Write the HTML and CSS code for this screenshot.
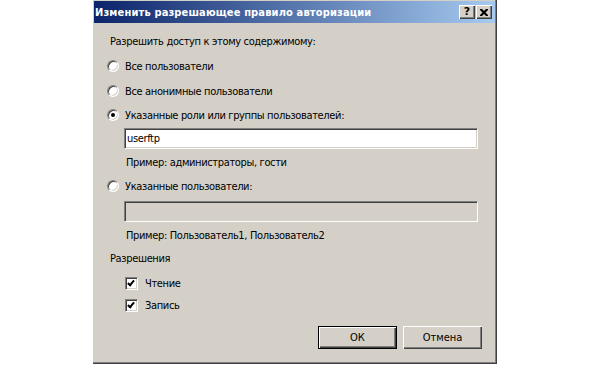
FILE: index.html
```html
<!DOCTYPE html>
<html lang="ru">
  <head>
    <meta charset="utf-8" />
    <title>Изменить разрешающее правило авторизации</title>
    <link rel="stylesheet" href="styles.css">
  </head>
  <body>
    <div class="dialog">
      <div class="titlebar">
        <span class="title">Изменить разрешающее правило авторизации</span>
        <div class="caption-buttons">
          <button class="cap-btn">?</button>
          <button class="cap-btn close">
            <svg width="8" height="7" viewBox="0 0 8 7"><path d="M0 0h2l2 2 2-2h2v1l-2.5 2.5 2.5 2.5v1h-2l-2-2-2 2h-2v-1l2.5-2.5-2.5-2.5z" fill="#000"/></svg>
          </button>
        </div>
      </div>

      <div class="content">
        <div class="row label gap-10">Разрешить доступ к этому содержимому:</div>

        <label class="row option gap-9">
          <span class="radio"></span>
          Все пользователи
        </label>
        <label class="row option gap-9">
          <span class="radio"></span>
          Все анонимные пользователи
        </label>
        <label class="row option gap-8">
          <span class="radio checked"></span>
          Указанные роли или группы пользователей:
        </label>
        <div class="field gap-5">userftp</div>
        <div class="row hint gap-5">Пример: администраторы, гости</div>

        <label class="row option gap-8">
          <span class="radio"></span>
          Указанные пользователи:
        </label>
        <div class="field disabled gap-7"></div>
        <div class="row hint gap-5">Пример: Пользователь1, Пользователь2</div>

        <div class="row label gap-7">Разрешения</div>
        <label class="row check gap-9">
          <span class="checkbox"></span>
          Чтение
        </label>
        <label class="row check gap-6">
          <span class="checkbox"></span>
          Запись
        </label>

        <div class="actions">
          <button class="btn default">ОК</button>
          <button class="btn">Отмена</button>
        </div>
      </div>
    </div>
  </body>
</html>
```

FILE: styles.css
```css
*,
*::before,
*::after {
  box-sizing: border-box;
}

* {
  margin: 0;
}

body {
  background: #fff;
  font-family: "DejaVu Sans Condensed", "DejaVu Sans", sans-serif;
  font-stretch: condensed;
  font-size: 11px;
  letter-spacing: -0.35px;
  color: #000;
}

.dialog {
  margin-left: 92px;
  width: 405px;
  height: 364px;
  background: #d4d0c8;
  display: flex;
  flex-direction: column;
  padding: 0 2px 2px 2px;
  box-shadow:
    inset 1px 0 0 #fff,
    inset -1px -1px 0 #404040,
    inset -2px -2px 0 #808080;
}

.titlebar {
  height: 22px;
  margin-top: 1px;
  background: linear-gradient(to right, #0a246a, #a6caf0);
  display: flex;
  align-items: center;
  justify-content: space-between;
  padding: 0 3px 0 1px;
}

.title {
  color: #fff;
  font-weight: bold;
  font-size: 11px;
  letter-spacing: 0.15px;
}

.caption-buttons {
  display: flex;
  gap: 1px;
}

.cap-btn {
  width: 16px;
  height: 14px;
  padding: 0;
  border: none;
  background: #d4d0c8;
  font-family: "DejaVu Sans", sans-serif;
  font-weight: bold;
  font-size: 11px;
  line-height: 14px;
  display: flex;
  align-items: center;
  justify-content: center;
  box-shadow:
    inset 1px 1px 0 #fff,
    inset -1px -1px 0 #404040,
    inset -2px -2px 0 #808080;
}

.content {
  flex: 1;
  display: flex;
  flex-direction: column;
  padding-left: 16px;
}

.row {
  height: 16px;
  display: flex;
  align-items: center;
}

.option {
  margin-left: -3px;
}

.option .radio {
  margin-right: 6px;
}

.radio {
  width: 12px;
  height: 12px;
  border-radius: 50%;
  background: #fff;
  position: relative;
  border: 1px solid;
  border-color: #808080 #fff #fff #808080;
  box-shadow: inset 1px 1px 0 #404040, inset -1px -1px 0 #d4d0c8;
}

.radio.checked::after {
  content: "";
  position: absolute;
  left: 3px;
  top: 3px;
  width: 4px;
  height: 4px;
  border-radius: 50%;
  background: #000;
}

.field {
  margin-left: 14px;
  width: 354px;
  height: 21px;
  background: #fff;
  padding: 3px 0 0 2px;
  line-height: 14px;
  border: 1px solid;
  border-color: #808080 #fff #fff #808080;
  box-shadow: inset 1px 1px 0 #404040, inset -1px -1px 0 #d4d0c8;
}

.field.disabled {
  background: #d4d0c8;
}

.hint {
  padding-left: 16px;
}

.check {
  padding-left: 15px;
}

.checkbox {
  width: 13px;
  height: 13px;
  margin-right: 7px;
  background: #fff;
  border: 1px solid;
  border-color: #808080 #fff #fff #808080;
  box-shadow: inset 1px 1px 0 #404040, inset -1px -1px 0 #d4d0c8;
  position: relative;
}

.checkbox::after {
  content: "";
  position: absolute;
  left: 3px;
  top: 1px;
  width: 4px;
  height: 7px;
  border: solid #000;
  border-width: 0 2px 2px 0;
  transform: rotate(40deg);
  transform-origin: center;
}

.gap-5 { margin-top: 5px; }
.gap-6 { margin-top: 6px; }
.gap-7 { margin-top: 7px; }
.gap-8 { margin-top: 8px; }
.gap-9 { margin-top: 9px; }
.gap-10 { margin-top: 10px; }

.actions {
  display: flex;
  justify-content: flex-end;
  gap: 6px;
  margin-top: 13px;
  padding-right: 13px;
}

.btn {
  width: 79px;
  height: 23px;
  padding: 0;
  font: inherit;
  font-size: 11px;
  background: #d4d0c8;
  border: none;
  box-shadow:
    inset 1px 1px 0 #fff,
    inset -1px -1px 0 #404040,
    inset -2px -2px 0 #808080;
}

.btn.default {
  border: 1px solid #000;
  box-shadow:
    inset 1px 1px 0 #fff,
    inset -1px -1px 0 #404040,
    inset -2px -2px 0 #808080;
}
```
